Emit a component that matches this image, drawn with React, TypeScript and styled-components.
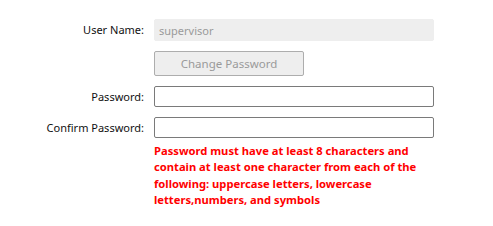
import React from "react";
import styled, { createGlobalStyle } from "styled-components";

const Global = createGlobalStyle`
  html, body { margin: 0; padding: 0; background: #ffffff; }
  body { font-family: "Noto Sans", "Open Sans", sans-serif; }
`;

const Form = styled.div`
  display: grid;
  grid-template-columns: 144px 280px;
  column-gap: 10px;
  row-gap: 10px;
  padding-top: 19px;
  align-items: center;
`;

const Label = styled.label`
  text-align: right;
  font-size: 11px;
  color: #111111;
  line-height: 16px;
`;

const Field = styled.div<{ $disabled?: boolean }>`
  box-sizing: border-box;
  height: ${(p) => (p.$disabled ? "22px" : "21px")};
  border: ${(p) => (p.$disabled ? "1px solid #eeeeee" : "1px solid #7a7a7a")};
  background: ${(p) => (p.$disabled ? "#eeeeee" : "#ffffff")};
  border-radius: 2px;
  font-size: 11px;
  color: #9a9a9a;
  display: flex;
  align-items: center;
  padding-left: 4px;
`;

const Button = styled.button`
  box-sizing: border-box;
  width: 150px;
  height: 25px;
  border: 1px solid #adadad;
  background: #eeeeee;
  border-radius: 2px;
  font-family: inherit;
  font-size: 11.5px;
  color: #9a9a9a;
  padding: 0;
`;

const Error = styled.div`
  grid-column: 2;
  margin-top: -5px;
  color: #ff0000;
  font-weight: bold;
  font-size: 11.2px;
  line-height: 16.3px;
`;

const Spacer = styled.div``;

export default function App() {
  return (
    <>
      <Global />
      <Form>
        <Label>User Name:</Label>
        <Field $disabled>supervisor</Field>
        <Spacer />
        <div>
          <Button>Change Password</Button>
        </div>
        <Label>Password:</Label>
        <Field />
        <Label>Confirm Password:</Label>
        <Field />
        <Error>
          Password must have at least 8 characters and contain at least one
          character from each of the following: uppercase letters, lowercase
          letters,numbers, and symbols
        </Error>
      </Form>
    </>
  );
}
